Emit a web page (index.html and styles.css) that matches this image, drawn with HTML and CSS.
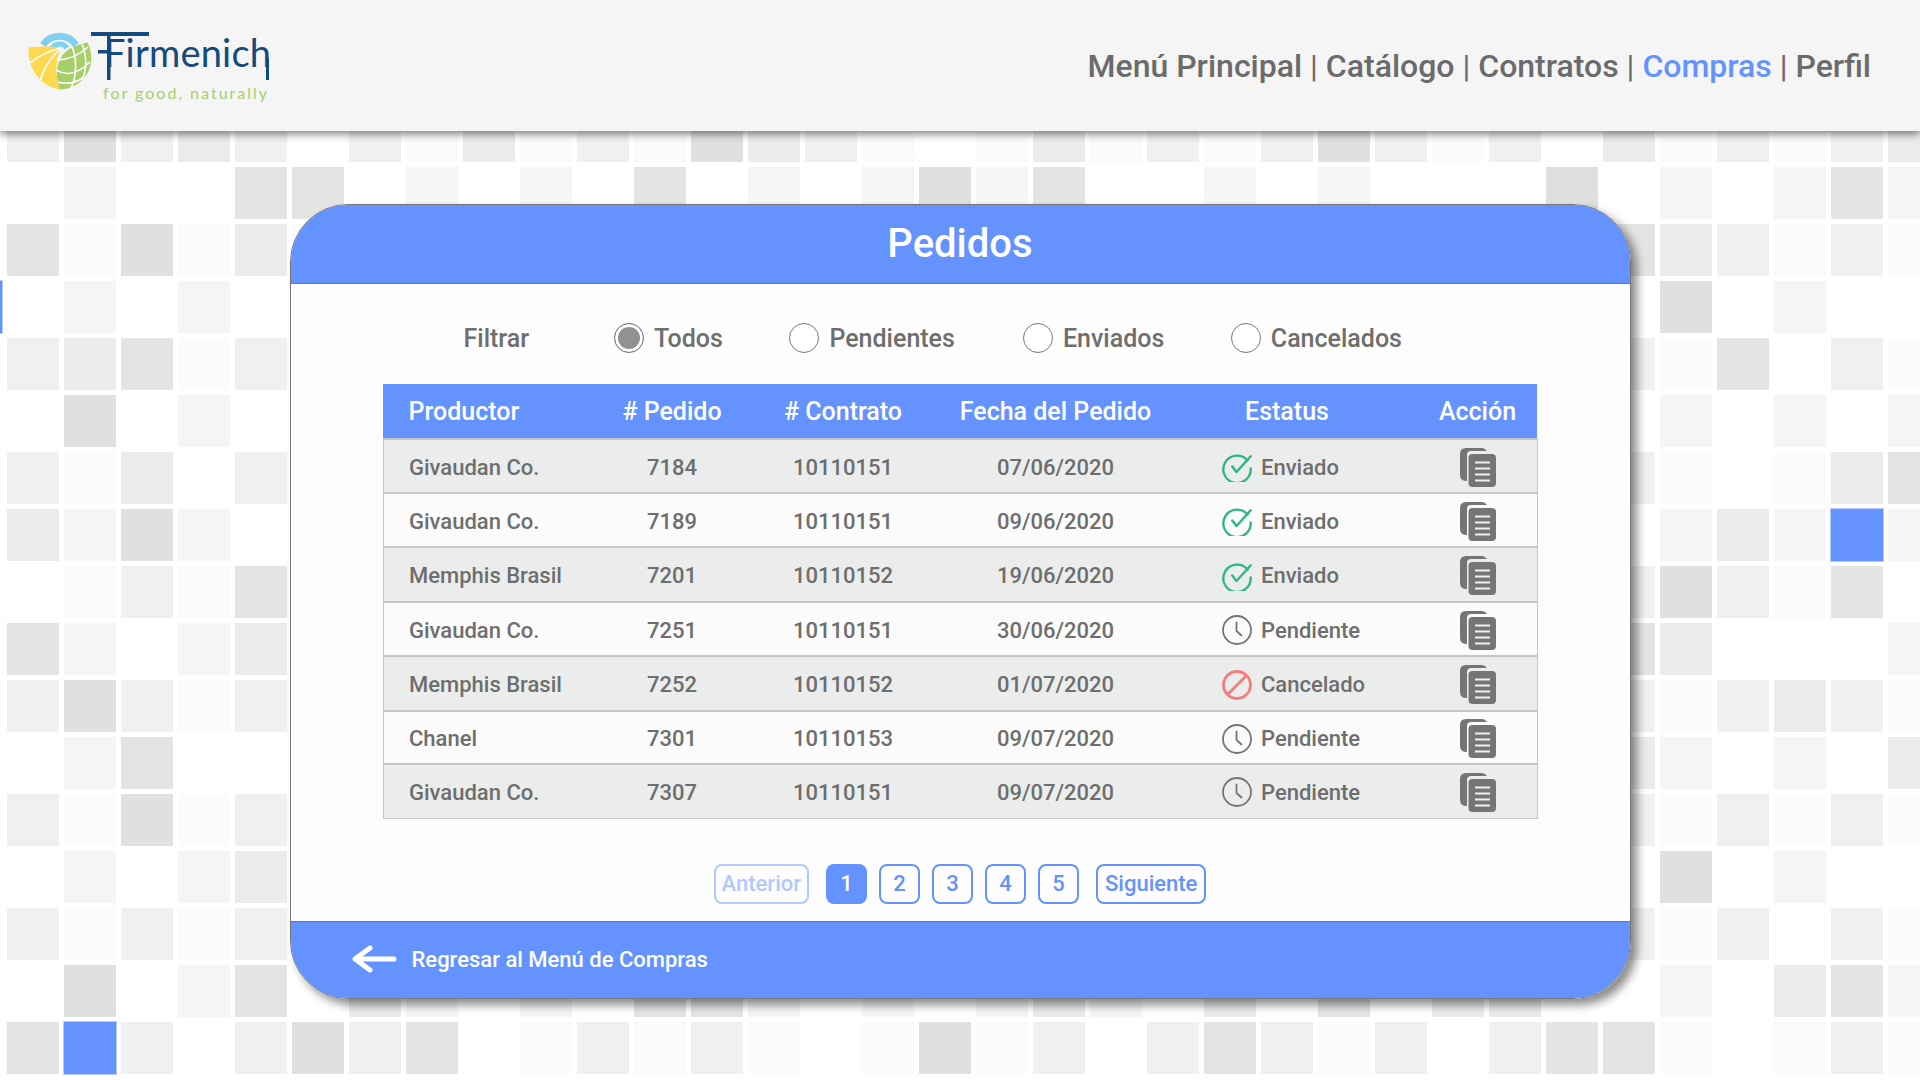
FILE: index.html
```html
<!DOCTYPE html>
<html lang="es">
<head>
  <meta charset="UTF-8">
  <title>Pedidos</title>
  <link rel="stylesheet" href="styles.css">
</head>
<body>
  <!-- Background mosaic, filled by tiles.js -->
  <div id="tiles" class="tiles"></div>

  <!-- Shared icons -->
  <svg class="icon-defs" width="0" height="0">
    <symbol id="icon-sent" viewBox="0 0 30 30">
      <path d="M25.500 8.500A13.700 13.700 0 1 0 28.700 16.500" fill="none" stroke="#2fb77f" stroke-width="2.400" stroke-linecap="round"/>
      <path d="M10.300 14.500l4.200 5.500L28.700 4.300" fill="none" stroke="#2fb77f" stroke-width="2.400" stroke-linecap="round" stroke-linejoin="round"/>
    </symbol>
    <symbol id="icon-pending" viewBox="0 0 30 30">
      <circle cx="15" cy="15" r="14" fill="none" stroke="#757575" stroke-width="1.800"/>
      <path d="M14.500 7.500v8.500l5 4.500" fill="none" stroke="#757575" stroke-width="1.800" stroke-linecap="round" stroke-linejoin="round"/>
    </symbol>
    <symbol id="icon-cancelled" viewBox="0 0 30 30">
      <circle cx="15" cy="15" r="13.500" fill="none" stroke="#f47c7c" stroke-width="2.800"/>
      <path d="M24.500 5.500L5.500 24.500" stroke="#f47c7c" stroke-width="2.800"/>
    </symbol>
    <symbol id="icon-copy" viewBox="0 0 36 39">
      <path d="M6 0H22Q25 0 27 3H11Q7 3 7 7V33Q0 33 0 27V6Q0 0 6 0Z" fill="#757575"/>
      <rect x="8.500" y="6" width="27.500" height="33" rx="4" fill="#757575"/>
      <path d="M15 14.500H30M15 20.500H30M15 26.500H30M15 32.500H30" stroke="#f0f0f0" stroke-width="1.800"/>
    </symbol>
  </svg>

  <header class="topbar">
    <a class="logo" href="#">
      <svg class="logo-mark" width="64" height="58" viewBox="0 0 64 58">
        <path d="M15 13A20 20 0 0 1 48 13" fill="none" stroke="#7dd0ee" stroke-width="7"/>
        <path d="M24 16A9 9 0 0 1 39 16" fill="none" stroke="#7dd0ee" stroke-width="5"/>
        <path d="M.5 15.500Q16 13.500 33.500 15.500Q24 34 32 57.500C12 55 -1 35 .5 15.500Z" fill="#fdd94f"/>
        <path d="M59.500 10.500C65 22 65 36 56 46C50 53 42 57 32 57.500C27 44 28 30 36 21.500C42 15 50 12.500 59.500 10.500Z" fill="#a6cf69"/>
        <path d="M2 31C10 24 21 19 33 16M12 49C15 38 22 26 33 16" fill="none" stroke="#fff" stroke-width="1.600"/>
        <path d="M44 15C49 26 49 44 43 56M54 12C59 24 59 38 54 48M28 38C38 44 50 42 62 30M29 28C38 28 50 24 60 15M30 50C40 53 48 51 56 45" fill="none" stroke="#fff" stroke-width="1.600"/>
      </svg>
      <span class="logo-text">
        <span class="logo-name">Firmenich</span>
        <span class="logo-tag">for good, naturally</span>
      </span>
    </a>
    <nav class="main-nav">
      <a href="#">Menú Principal</a> <span class="sep">|</span>
      <a href="#">Catálogo</a> <span class="sep">|</span>
      <a href="#">Contratos</a> <span class="sep">|</span>
      <a href="#" class="active">Compras</a> <span class="sep">|</span>
      <a href="#">Perfil</a>
    </nav>
  </header>

  <main class="page">
    <section class="card">
      <h1 class="card-title">Pedidos</h1>

      <div class="card-body">
        <div class="filters">
          <span class="filter-label">Filtrar</span>
          <label class="radio-item"><span class="radio checked"></span>Todos</label>
          <label class="radio-item"><span class="radio"></span>Pendientes</label>
          <label class="radio-item"><span class="radio"></span>Enviados</label>
          <label class="radio-item"><span class="radio"></span>Cancelados</label>
        </div>

        <table class="orders">
          <thead>
            <tr>
              <th class="col-producer">Productor</th>
              <th class="col-order"># Pedido</th>
              <th class="col-contract"># Contrato</th>
              <th class="col-date">Fecha del Pedido</th>
              <th class="col-status">Estatus</th>
              <th class="col-action">Acción</th>
            </tr>
          </thead>
          <tbody>
            <tr>
              <td class="col-producer">Givaudan Co.</td><td>7184</td><td>10110151</td><td>07/06/2020</td>
              <td><span class="status"><svg class="status-icon"><use href="#icon-sent"/></svg>Enviado</span></td>
              <td class="col-action"><svg class="copy-icon"><use href="#icon-copy"/></svg></td>
            </tr>
            <tr>
              <td class="col-producer">Givaudan Co.</td><td>7189</td><td>10110151</td><td>09/06/2020</td>
              <td><span class="status"><svg class="status-icon"><use href="#icon-sent"/></svg>Enviado</span></td>
              <td class="col-action"><svg class="copy-icon"><use href="#icon-copy"/></svg></td>
            </tr>
            <tr class="tall">
              <td class="col-producer">Memphis Brasil</td><td>7201</td><td>10110152</td><td>19/06/2020</td>
              <td><span class="status"><svg class="status-icon"><use href="#icon-sent"/></svg>Enviado</span></td>
              <td class="col-action"><svg class="copy-icon"><use href="#icon-copy"/></svg></td>
            </tr>
            <tr>
              <td class="col-producer">Givaudan Co.</td><td>7251</td><td>10110151</td><td>30/06/2020</td>
              <td><span class="status"><svg class="status-icon"><use href="#icon-pending"/></svg>Pendiente</span></td>
              <td class="col-action"><svg class="copy-icon"><use href="#icon-copy"/></svg></td>
            </tr>
            <tr class="tall">
              <td class="col-producer">Memphis Brasil</td><td>7252</td><td>10110152</td><td>01/07/2020</td>
              <td><span class="status"><svg class="status-icon"><use href="#icon-cancelled"/></svg>Cancelado</span></td>
              <td class="col-action"><svg class="copy-icon"><use href="#icon-copy"/></svg></td>
            </tr>
            <tr class="short">
              <td class="col-producer">Chanel</td><td>7301</td><td>10110153</td><td>09/07/2020</td>
              <td><span class="status"><svg class="status-icon"><use href="#icon-pending"/></svg>Pendiente</span></td>
              <td class="col-action"><svg class="copy-icon"><use href="#icon-copy"/></svg></td>
            </tr>
            <tr>
              <td class="col-producer">Givaudan Co.</td><td>7307</td><td>10110151</td><td>09/07/2020</td>
              <td><span class="status"><svg class="status-icon"><use href="#icon-pending"/></svg>Pendiente</span></td>
              <td class="col-action"><svg class="copy-icon"><use href="#icon-copy"/></svg></td>
            </tr>
          </tbody>
        </table>

        <div class="pager">
          <a href="#" class="page-btn wide disabled">Anterior</a>
          <div class="page-numbers">
            <a href="#" class="page-btn current">1</a>
            <a href="#" class="page-btn">2</a>
            <a href="#" class="page-btn">3</a>
            <a href="#" class="page-btn">4</a>
            <a href="#" class="page-btn">5</a>
          </div>
          <a href="#" class="page-btn wide">Siguiente</a>
        </div>
      </div>

      <a class="card-footer" href="#">
        <svg class="back-arrow" width="45" height="28" viewBox="0 0 45 28">
          <path d="M3 14H42M18 3L3 14L18 25" fill="none" stroke="#fff" stroke-width="5" stroke-linecap="round" stroke-linejoin="round"/>
        </svg>
        Regresar al Menú de Compras
      </a>
    </section>
  </main>

  <script src="tiles.js"></script>
</body>
</html>
```

FILE: styles.css
```css
body {
  margin: 0;
  height: 1080px;
  overflow: hidden;
  position: relative;
  background: #fff;
  color: #6e6e6e;
  font-family: Roboto, "Liberation Sans", sans-serif;
}

a { color: inherit; text-decoration: none; }

.icon-defs { position: absolute; }

/* Background mosaic */
.tiles {
  position: absolute;
  top: 110px;
  left: -50px;
  display: grid;
  grid-template-columns: repeat(35, 52px);
  grid-auto-rows: 52px;
  gap: 5px;
}
.tile-1 { background: #fbfbfb; }
.tile-2 { background: #f5f5f5; }
.tile-3 { background: #f0f0f0; }
.tile-4 { background: #ebebeb; }
.tile-5 { background: #e4e4e4; }
.tile-6 { background: #e0e0e0; }
.tile-B { background: #6493ff; box-shadow: 0 0 0 1px #b4ccff; }

/* Top bar */
.topbar {
  position: relative;
  height: 131px;
  padding: 0 49px 0 28px;
  box-sizing: border-box;
  display: flex;
  align-items: center;
  justify-content: space-between;
  background: #f5f5f5;
  box-shadow: 0 3px 8px rgba(0, 0, 0, 0.5);
}
.logo {
  display: flex;
  align-items: flex-start;
  align-self: flex-start;
  margin-top: 32px;
}
.logo-text {
  display: flex;
  flex-direction: column;
  align-items: flex-end;
  margin-left: -1px;
}
.logo-name {
  width: 178px;
  height: 48px;
  box-sizing: border-box;
  padding-left: 13px;
  font-family: Lato, sans-serif;
  font-size: 38px;
  line-height: 41px;
  letter-spacing: 0.2px;
  color: #154a7d;
  /* top bar, long stem and crossbar stub of the F, long leg of the h */
  background:
    linear-gradient(#154a7d, #154a7d) 0 0 / 58px 4px no-repeat,
    linear-gradient(#154a7d, #154a7d) 16px 0 / 3.500px 48px no-repeat,
    linear-gradient(#154a7d, #154a7d) 7px 18px / 10px 3.500px no-repeat,
    linear-gradient(#154a7d, #154a7d) 174.500px 26px / 3.500px 22px no-repeat;
}
.logo-tag {
  margin-top: 3px;
  font-family: Lato, sans-serif;
  font-size: 16px;
  line-height: 20px;
  letter-spacing: 2px;
  color: #a6cf69;
}
.main-nav {
  font-size: 32px;
  font-weight: 500;
  color: #6b6b6b;
  white-space: nowrap;
}
.main-nav .sep { font-weight: 400; }
.main-nav .active { color: #6493ff; }

/* Card */
.page {
  display: flex;
  justify-content: center;
  padding-top: 73px;
  position: relative;
}
.card {
  width: 1341px;
  height: 795px;
  box-sizing: border-box;
  display: flex;
  flex-direction: column;
  background: #fdfdfd;
  border: 1px solid #777;
  border-radius: 58px;
  overflow: hidden;
}
.page::after {
  content: "";
  position: absolute;
  top: 73px;
  left: 290px;
  width: 1341px;
  height: 795px;
  border-radius: 58px;
  box-shadow: 6px 6px 10px rgba(0, 0, 0, 0.45);
  pointer-events: none;
}
.card-title {
  margin: 0;
  height: 78px;
  line-height: 78px;
  text-align: center;
  font-size: 40px;
  font-weight: 500;
  color: #fff;
  background: #6493ff;
  border-bottom: 1px solid #777;
}
.card-body {
  flex: 1;
  padding: 39px 92px 0;
}

/* Filter row */
.filters {
  display: flex;
  align-items: center;
  height: 30px;
  padding-left: 81px;
  font-size: 25px;
  font-weight: 500;
}
.filter-label { margin-right: 85px; }
.radio-item {
  display: flex;
  align-items: center;
  gap: 10px;
  margin-right: 66.500px;
}
.radio-item:nth-child(3) { margin-right: 68px; }
.radio {
  width: 28px;
  height: 28px;
  border: 1px solid #777;
  border-radius: 50%;
  background: #fff;
}
.radio.checked { background: #919191; box-shadow: inset 0 0 0 3px #fff; }

/* Orders table */
.orders {
  width: 1155px;
  margin-top: 31px;
  border-collapse: collapse;
  table-layout: fixed;
  font-size: 22px;
  font-weight: 500;
  text-align: center;
}
.orders th {
  height: 54px;
  padding: 0;
  font-size: 25px;
  font-weight: 500;
  color: #fff;
  background: #6493ff;
}
.orders td {
  height: 54px;
  padding: 2px 0 0;
  box-sizing: border-box;
  border-top: 2px solid #c6c6c6;
}
.orders tbody tr:nth-child(odd) { background: #ebeded; }
.orders tbody tr:nth-child(even) { background: #fbfbfb; }
.orders tbody tr.tall td { height: 55px; }
.orders tbody tr.short td { height: 53px; }
.orders tbody { border: 1px solid #c6c6c6; }
.orders th.col-producer, .orders td.col-producer { width: 204px; padding-left: 25.500px; text-align: left; box-sizing: border-box; }
.col-order { width: 170px; }
.col-contract { width: 172px; }
.col-date { width: 253px; }
.col-status { width: 210px; }
.orders th.col-action { padding-left: 26px; box-sizing: border-box; }
.orders td.col-action { padding-left: 28px; }

.status {
  display: flex;
  align-items: center;
  gap: 9px;
  padding-left: 40px;
}
.status-icon { width: 30px; height: 30px; }
.copy-icon { display: block; width: 36px; height: 39px; margin: 0 auto; }

/* Pagination */
.pager {
  display: flex;
  justify-content: center;
  gap: 17px;
  margin-top: 45px;
}
.page-numbers { display: flex; gap: 12px; }
.page-btn {
  width: 41px;
  height: 40px;
  box-sizing: border-box;
  display: flex;
  align-items: center;
  justify-content: center;
  border: 2px solid #6493ff;
  border-radius: 8px;
  font-size: 22px;
  font-weight: 500;
  color: #6493ff;
}
.page-btn.wide { width: auto; padding: 0 7px; }
.page-btn.current { background: #6493ff; color: #fff; }
.page-btn.disabled { padding: 0 6px; border-color: #b1c9ff; color: #b1c9ff; }

/* Card footer */
.card-footer {
  height: 77px;
  box-sizing: border-box;
  display: flex;
  align-items: center;
  gap: 15px;
  padding: 0 0 2px 61px;
  font-size: 22px;
  font-weight: 500;
  color: #fff;
  background: #6493ff;
  border-top: 1px solid #777;
}
```

FILE: tiles.js
```js
// One string per row, one char per tile: 0 = empty, 1-6 = grey shade, B = blue
// Columns hidden behind the card stay 0
const blank = '0'.repeat(22);
const rows = [
  '0363430' + '3141316431014131363130' + '413134',
  '0020055' + '0202050202625002020006' + '020252',
  '0516141' + blank + '543131',
  'B020200' + blank + '060200',
  '0345130' + blank + '315031',
  '0060200' + blank + '020202',
  '0314030' + blank + '310145',
  '0426200' + blank + '0242B2',
  '0013150' + blank + '363150',
  '0520240' + blank + '540002',
  '0363130' + blank + '313431',
  '0025000' + blank + '420204',
  '0316130' + blank + '313131',
  '0020240' + blank + '060200',
  '0313130' + blank + '313031',
  '0060250' + '4202055202024204050440' + '020452',
  '05B3036' + '3501313101613035313035' + '510131'
];

const tiles = document.getElementById('tiles');
rows.join('').split('').forEach((shade) => {
  const tile = document.createElement('div');
  tile.className = 'tile-' + shade;
  tiles.appendChild(tile);
});
```
